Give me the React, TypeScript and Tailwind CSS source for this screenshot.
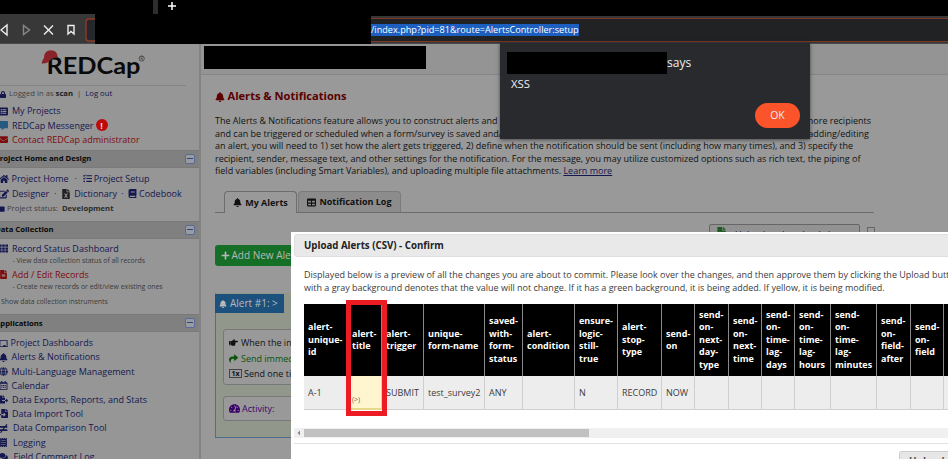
import React from 'react';
import { FaBell, FaLock, FaListAlt, FaCommentAlt, FaEnvelope, FaHome, FaTasks, FaEdit, FaFileExcel, FaBook, FaTh, FaFileAlt, FaGlobe, FaRegCalendarAlt, FaFileExport, FaFileImport, FaNotEqual, FaComments, FaPlus, FaTable, FaHandPointRight, FaShare, FaTachometerAlt, FaChalkboard, FaSquare, FaReceipt } from 'react-icons/fa';

function Section({ title }: { title: string }) {
  return (
    <div className="flex h-[18px] w-[200px] shrink-0 items-center justify-between border-y border-[#7a7a7a] bg-[#808080] pr-[5px]">
      <span className="-ml-[5px] pt-px text-[7.7px] font-bold text-[#080808]">{title}</span>
      <span className="flex h-[10px] w-[10px] items-center justify-center rounded-[2px] border border-[#5a6a96] bg-[#989ba2]">
        <span className="h-px w-[6px] bg-[#34457c]" />
      </span>
    </div>
  );
}

function Item({ icon, children, red, gap }: { icon: React.ReactNode; children: React.ReactNode; red?: boolean; gap?: string }) {
  return (
    <div className={`flex h-[14.2px] items-center ${red ? 'text-[#7d0c0c]' : 'text-[#15174f]'}`}>
      <span className="-ml-[2px] flex w-[10px] shrink-0 justify-center">{icon}</span>
      <span className={`${gap ?? 'ml-[4px]'} text-[9px]`}>{children}</span>
    </div>
  );
}

function Sidebar() {
  return (
    <aside className="flex h-[416px] w-[201px] shrink-0 flex-col overflow-hidden border-r-2 border-[#838383] bg-[#969696] whitespace-nowrap">
      <div className="flex h-[41px] shrink-0 items-center">
        <svg width="110" height="36" viewBox="0 0 110 36" className="ml-[40px]">
          <text x="6.500" y="26.500" fontFamily="Lato, sans-serif" fontWeight="700" fontSize="23.500" textLength="94" lengthAdjust="spacingAndGlyphs" fill="#0a0a0a">REDCap</text>
          <path d="M4 11 Q4 3.500 11 3.300 Q17.500 3.300 17.800 10.500 Q13 10 10 13.500 Q7 17 1.500 16.500 Q2 13 4 11 Z" fill="#8a2229" />
          <circle cx="101.700" cy="11.500" r="2.600" fill="none" stroke="#333" strokeWidth=".7" />
          <text x="100.200" y="13.200" fontSize="4.500" fill="#333" fontFamily="Open Sans, sans-serif">R</text>
        </svg>
      </div>
      <div className="w-[186px] border-t border-[#858585]" />
      <div className="flex h-[16px] shrink-0 items-center text-[7.7px] text-[#444]">
        <FaLock className="mr-[3px] h-[7px] w-[6px] text-[#15174f]" />
        <span>Logged in as <b className="text-[#1c1c1c]">scan</b></span>
        <span className="mx-[4px]">|</span>
        <span className="text-[#15174f]">Log out</span>
      </div>
      <div className="mt-[2px]">
        <Item icon={<FaListAlt size={9} />}>My Projects</Item>
        <Item icon={<FaCommentAlt size={9} className="text-[#245a80]" />}>
          <span className="flex items-center">REDCap Messenger
            <span className="ml-[2px] flex h-[12px] w-[12px] items-center justify-center rounded-full bg-[#c00808] text-[9px] font-bold text-[#ddd]">!</span>
          </span>
        </Item>
        <Item red icon={<FaEnvelope size={9} />}>Contact REDCap administrator</Item>
      </div>
      <div className="h-[3px] shrink-0" />
      <Section title="Project Home and Design" />
      <div className="mt-[3.500px] flex h-[15px] shrink-0 items-center text-[9px] text-[#15174f]">
        <FaHome size={10} className="-ml-[1px] mr-[2.500px]" />Project Home<span className="w-[14px] text-center">·</span>
        <FaTasks size={9} className="mr-[2px]" />Project Setup
      </div>
      <div className="flex h-[15px] shrink-0 items-center text-[9px] text-[#15174f]">
        <FaEdit size={10} className="-ml-[1px] mr-[3px]" />Designer<span className="w-[12px] text-center">·</span>
        <FaFileExcel size={10} className="mr-[3px] text-[#222]" />Dictionary<span className="w-[11px] text-center">·</span>
        <FaBook size={9} className="mr-[2px]" />Codebook
      </div>
      <div className="flex h-[15px] shrink-0 items-center text-[7.7px] text-[#404040]">
        <FaSquare size={6} className="-ml-[1px] mr-[2px] text-[#15174f]" />Project status:<b className="ml-[4px] text-[#2c2c2c]">Development</b>
      </div>
      <div className="h-[4.500px] shrink-0" />
      <Section title="Data Collection" />
      <div className="mt-[3px] text-[6.9px] text-[#3a3a3a]">
        <Item icon={<FaTh size={9} />}>Record Status Dashboard</Item>
        <div className="flex h-[11.500px] items-center pl-[12.500px]">- View data collection status of all records</div>
        <Item red icon={<FaFileAlt size={9} />}>Add / Edit Records</Item>
        <div className="flex h-[11px] items-center pl-[12.500px]">- Create new records or edit/view existing ones</div>
        <div className="mt-[3px] flex h-[14px] items-center pl-[1px]">Show data collection instruments</div>
      </div>
      <div className="h-[4.500px] shrink-0" />
      <Section title="Applications" />
      <div className="mt-[4px]">
        <Item gap="ml-[2.500px]" icon={<FaChalkboard size={9} />}>Project Dashboards</Item>
        <Item gap="ml-[3.500px]" icon={<FaBell size={9} />}>Alerts &amp; Notifications</Item>
        <Item gap="ml-[3.500px]" icon={<FaGlobe size={9} />}>Multi-Language Management</Item>
        <Item gap="ml-[3.500px]" icon={<FaRegCalendarAlt size={9} />}>Calendar</Item>
        <Item icon={<FaFileExport size={9} />}>Data Exports, Reports, and Stats</Item>
        <Item icon={<FaFileImport size={9} />}>Data Import Tool</Item>
        <Item gap="ml-[5px]" icon={<FaNotEqual size={9} />}>Data Comparison Tool</Item>
        <Item gap="ml-[5px]" icon={<FaReceipt size={9} />}>Logging</Item>
        <Item gap="ml-[5.500px]" icon={<FaComments size={9} />}>Field Comment Log</Item>
      </div>
    </aside>
  );
}

const columns: [string, string, string][] = [
  ['alert-\nunique-\nid', 'A-1', 'w-[44px]'],
  ['alert-\ntitle', '(>)', 'w-[34px]'],
  ['alert-\ntrigger', 'SUBMIT', 'w-[42px]'],
  ['unique-\nform-name', 'test_survey2', 'w-[61px]'],
  ['saved-\nwith-\nform-\nstatus', 'ANY', 'w-[38px]'],
  ['alert-\ncondition', '', 'w-[52px]'],
  ['ensure-\nlogic-\nstill-\ntrue', 'N', 'w-[43px]'],
  ['alert-\nstop-\ntype', 'RECORD', 'w-[44px]'],
  ['send-\non', 'NOW', 'w-[33px]'],
  ['send-\non-\nnext-\nday-\ntype', '', 'w-[34px]'],
  ['send-\non-\nnext-\ntime', '', 'w-[33px]'],
  ['send-\non-\ntime-\nlag-\ndays', '', 'w-[33px]'],
  ['send-\non-\ntime-\nlag-\nhours', '', 'w-[36px]'],
  ['send-\non-\ntime-\nlag-\nminutes', '', 'w-[46px]'],
  ['send-\non-\nfield-\nafter', '', 'w-[34px]'],
  ['send-\non-\nfield', '', 'w-[33px]'],
  ['', '', 'w-[34px]'],
];

function UploadDialog() {
  return (
    <div className="absolute top-[232px] left-[291px] h-[227px] w-[657px] overflow-hidden bg-white pt-[2px] pl-[3px] whitespace-nowrap text-[#3c3c3c]">
      <div className="flex h-[23px] w-[670px] items-center rounded-[3px] border border-[#dedede] bg-[#e9e9e9] pl-[9px] text-[9.7px] font-bold text-[#222]">
        <span className="pt-px">Upload Alerts (CSV) - Confirm</span>
      </div>
      <div className="mt-[11px] ml-[10px] text-[9px] leading-[13px]">
        <p>Displayed below is a preview of all the changes you are about to commit. Please look over the changes, and then approve them by clicking the Upload button</p>
        <p>with a gray background denotes that the value will not change. If it has a green background, it is being added. If yellow, it is being modified.</p>
      </div>
      <div className="mt-[10px] ml-[10px] flex w-[680px]">
        {columns.map(([head, value, width], i) => (
          <div key={i} className={`${width} shrink-0`}>
            <div className="flex h-[72px] items-center border-r border-[#8a8a8a] bg-black pl-[4px] text-[9px] leading-[12.5px] font-bold whitespace-pre text-white">{head}</div>
            {i === 1 ? (
              <div className="flex h-[34px] items-end border-r border-b-2 border-[#e8d98a] bg-[#fff5cf] pb-[3px] pl-[4px] text-[7px] text-[#666]">{value}</div>
            ) : (
              <div className="flex h-[34px] items-center border-r border-b border-[#cfcfcf] bg-[#ededed] pt-px pl-[4px] text-[9px]">{value}</div>
            )}
          </div>
        ))}
      </div>
      <div className="mt-[18px] flex h-[10px] w-[670px] items-center bg-[#f0f0f0]">
        <svg width="10" height="10" className="shrink-0"><path d="M6 2.500v5L3.500 5z" fill="#888" /></svg>
        <div className="h-[8px] w-[285px] bg-[#c1c1c1]" />
      </div>
      <div className="mt-[5px] border-t border-[#e2e2e2]" />
      <div className="mt-[7px] ml-[605px] h-[20px] w-[80px] rounded-[3px] border border-[#ccc] bg-[#e6e6e6] pt-[3px] pl-[9px] text-[10px] leading-[13px] font-bold text-[#555]">Upload</div>
    </div>
  );
}

export default function App() {
  return (
    <div className="relative flex h-[459px] w-[948px] flex-col overflow-hidden bg-[#979797] font-['Open_Sans','Noto_Sans',sans-serif]">
      <div className="flex h-[14px] shrink-0 bg-black">
        <div className="ml-[153px] h-[14px] w-[5px] bg-[#2d2d2d]" />
        <svg width="10" height="10" className="mt-px ml-[9px]"><path d="M5 1v8M1 5h8" stroke="#fff" strokeWidth="1.500" /></svg>
      </div>
      <div className="flex h-[30px] shrink-0 border-b border-[#47494c] bg-[#383838]">
        <svg width="95" height="29" fill="none" strokeWidth="1.400" className="shrink-0">
          <path d="M7 11v10L1 16z" stroke="#eee" />
          <path d="M23.500 11.500v9l6-4.500z" stroke="#888" />
          <path d="M44 11.500l9 9M53 11.500l-9 9" stroke="#eee" />
          <path d="M68 11.500h6v8.500l-3-2.500l-3 2.500z" stroke="#eee" />
          <path d="M96 5h-7q-3 0-3 3v16q0 3 3 3h7" stroke="#8c3b27" fill="#25272a" />
        </svg>
        <div className="h-[30px] w-[276px] shrink-0 bg-black" />
        <div className="w-[577px]">
          <div className="h-[2px] bg-black" />
          <div className="mt-[2px] flex h-[24px] items-center border-y border-[#7d3524] bg-[#202224] text-[9.15px] text-white">
            <span className="bg-[#1c5fbf] leading-[12px]">/index.php?pid=81&amp;route=AlertsController:setup</span>
          </div>
        </div>
      </div>
      <div className="flex h-[415px]">
        <Sidebar />
        <main className="w-[747px] bg-[#999] whitespace-nowrap text-[#111]">
          <div className="flex h-[31px] border-b border-[#868686] bg-[#949494] pt-[2px] pl-[3px]"><div className="h-[23px] w-[222px] bg-black" /></div>
          <div className="pl-[14px]">
            <h1 className="mt-[13px] flex h-[17px] items-center gap-[2.500px] text-[11.1px] font-bold text-[#5c0000]"><FaBell size={10} />Alerts &amp; Notifications</h1>
            <div className="mt-[10px] flex h-[25px] w-[659px] justify-between text-[9px] leading-[12.5px]">
              <div>
                <p>The Alerts &amp; Notifications feature allows you to construct alerts and</p>
                <p>and can be triggered or scheduled when a form/survey is saved and/</p>
              </div>
              <div className="w-[98px]">
                <p className="flex w-[95px] justify-end">more recipients</p>
                <p className="flex w-[93px] justify-end">adding/editing</p>
              </div>
            </div>
            <div className="h-[37.500px] text-[9px] leading-[12.5px]">
              <p>an alert, you will need to 1) set how the alert gets triggered, 2) define when the notification should be sent (including how many times), and 3) specify the</p>
              <p>recipient, sender, message text, and other settings for the notification. For the message, you may utilize customized options such as rich text, the piping of</p>
              <p>field variables (including Smart Variables), and uploading multiple file attachments. <span className="text-[#15174f] underline">Learn more</span></p>
            </div>
            <div className="mt-[13.500px] flex h-[22px] w-[659px] items-end border-b border-[#6d6d6d] pl-[9px] text-[9px] font-bold">
              <div className="-mb-px flex h-[22px] w-[73px] items-center justify-center gap-[3px] rounded-t-[4px] border border-b-0 border-[#6d6d6d] bg-[#999]"><FaBell size={9} />My Alerts</div>
              <div className="ml-[1px] flex h-[21px] w-[103px] items-center justify-center gap-[3px] rounded-t-[4px] border border-b-0 border-[#7b7b7b] bg-[#8c8c8c]"><FaTable size={9} />Notification Log</div>
            </div>
            <div className="mt-[11px] ml-[494px] flex h-[22px] w-[170px]">
              <div className="flex h-[22px] w-[151px] items-start rounded-[2px] border border-[#666] bg-[#929292] pt-[2px] pl-[6px]">
                <FaFileExcel size={11} className="text-[#1d5a20]" />
                <span className="mt-[2px] ml-[8px] text-[9px] leading-[12px]">Upload or download alerts</span>
              </div>
              <div className="mt-[3px] ml-[7px] h-[10px] w-[8px] border border-[#666]" />
            </div>
            <div className="-mt-[1px] flex h-[21px] w-[100px] items-center gap-[1.500px] rounded-[3px] bg-[#156f27] pl-[6px] text-[10px] text-[#b8b8b8]"><FaPlus size={9} />Add New Alert</div>
            <div className="mt-[27px] h-[145px] w-[650px] border border-[#4b6f8c] border-t-transparent bg-[#92978b]">
              <div className="-ml-px flex h-[19px] w-[69px] items-center gap-[3px] bg-[#1d517d] pl-[4px] text-[10px] text-[#b8b8b8]"><FaBell size={8} />Alert #1: &gt;</div>
              <div className="mt-[16px] ml-[7px] h-[56px] w-[600px] rounded-[3px] border border-[#777] bg-[#999] pt-[5px] pl-[5px] text-[9px]">
                <div className="flex h-[15.500px] items-center gap-[3px]"><FaHandPointRight size={9} />When the instrument</div>
                <div className="flex h-[15.500px] items-center gap-[3px] text-[#0a530a]"><FaShare size={9} />Send immediately</div>
                <div className="flex h-[15.500px] items-center gap-[2px]"><span className="flex h-[9px] w-[13px] items-center justify-center border border-[#444] text-[7px] font-bold">1x</span>Send one time</div>
              </div>
              <div className="mt-[11px] ml-[7px] flex h-[25px] w-[600px] items-center gap-[2px] rounded-[3px] border border-[#777] bg-[#999] pl-[5px] text-[9px] text-[#3a006a]"><FaTachometerAlt size={11} />Activity:</div>
            </div>
          </div>
        </main>
      </div>
      <UploadDialog />
      <div className="absolute top-[300px] left-[346px] h-[116px] w-[41px] border-[5px] border-[#ed1c24]" />
      <div className="absolute top-[43px] left-[500px] h-[96px] w-[310px] bg-[#292a2d] text-[#eee] shadow-[0_1px_4px_#0008]">
        <div className="mt-[9px] ml-[7px] flex h-[22px] items-center text-[12px]"><div className="h-[22px] w-[160px] bg-black" />says</div>
        <div className="mt-[3px] ml-[11px] text-[11.4px] leading-[13px]">XSS</div>
        <div className="mt-[13px] ml-[255px] flex h-[25px] w-[45px] items-center justify-center rounded-full bg-[#fb542b] text-[10.4px]">OK</div>
      </div>
    </div>
  );
}
